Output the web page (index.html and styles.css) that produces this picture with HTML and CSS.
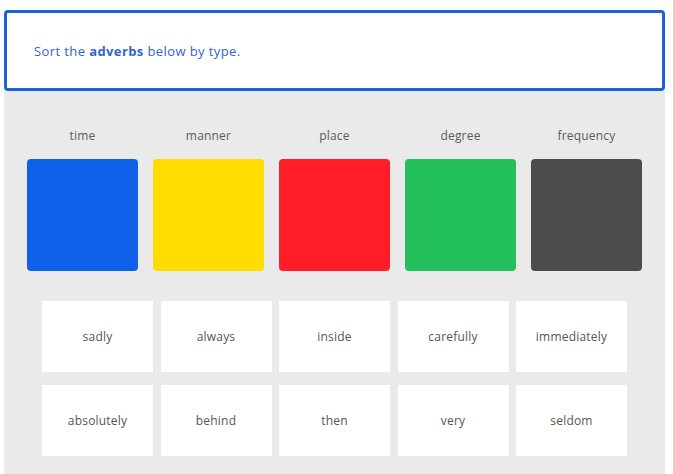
FILE: index.html
```html
<!DOCTYPE html>
<html lang="en">
  <head>
    <meta charset="utf-8">
    <title>Sort the adverbs</title>
    <meta name="viewport" content="width=device-width, initial-scale=1.0">
    <link rel="stylesheet" href="styles.css">
  </head>
  <body>
    <main class="activity">

      <div class="prompt">
        <p>Sort the <strong>adverbs</strong> below by type.</p>
      </div>

      <section class="board">

        <div class="bins">
          <div class="bin">
            <span class="bin-label">time</span>
            <div class="bin-box bin-time"></div>
          </div>
          <div class="bin">
            <span class="bin-label">manner</span>
            <div class="bin-box bin-manner"></div>
          </div>
          <div class="bin">
            <span class="bin-label">place</span>
            <div class="bin-box bin-place"></div>
          </div>
          <div class="bin">
            <span class="bin-label">degree</span>
            <div class="bin-box bin-degree"></div>
          </div>
          <div class="bin">
            <span class="bin-label">frequency</span>
            <div class="bin-box bin-frequency"></div>
          </div>
        </div>

        <div class="words">
          <div class="word">sadly</div>
          <div class="word">always</div>
          <div class="word">inside</div>
          <div class="word">carefully</div>
          <div class="word">immediately</div>
          <div class="word">absolutely</div>
          <div class="word">behind</div>
          <div class="word">then</div>
          <div class="word">very</div>
          <div class="word">seldom</div>
        </div>

      </section>

    </main>
  </body>
</html>
```

FILE: styles.css
```css
html {
  box-sizing: border-box;
}

*,
*:before,
*:after {
  box-sizing: inherit;
}

body {
  margin: 0;
  background: #fff;
  font-family: "Open Sans", "Liberation Sans", Arial, sans-serif;
  color: #555;
}

.activity {
  width: 661px;
  margin: 10px 0 0 4px;
}

.prompt {
  display: flex;
  align-items: center;
  height: 81px;
  padding: 0 27px;
  border: 3px solid #1b62d8;
  border-radius: 4px;
}

.prompt p {
  margin: 0;
  font-size: 13px;
  letter-spacing: 0.4px;
  color: #3263d2;
}

.prompt strong {
  font-weight: 700;
}

.board {
  background: #eaeaea;
  padding: 37px 0 18px;
}

.bins {
  display: grid;
  grid-template-columns: repeat(5, 111px);
  gap: 15px;
  justify-content: center;
}

.bin {
  display: flex;
  flex-direction: column;
  align-items: center;
  gap: 15px;
}

.bin-label {
  font-size: 12px;
  line-height: 16px;
  letter-spacing: 0.2px;
  color: #5a5a5a;
}

.bin-box {
  width: 111px;
  height: 112px;
  border-radius: 4px;
}

.bin-time { background: #0f61e9; }
.bin-manner { background: #ffdd00; }
.bin-place { background: #ff1d27; }
.bin-degree { background: #22bf5b; }
.bin-frequency { background: #4c4c4c; }

.words {
  display: grid;
  grid-template-columns: repeat(5, 111px);
  column-gap: 7.5px;
  row-gap: 13px;
  justify-content: center;
  margin-top: 30px;
}

.word {
  display: flex;
  align-items: center;
  justify-content: center;
  height: 71px;
  background: #fff;
  font-size: 12px;
  letter-spacing: 0.2px;
  color: #555;
}
```
